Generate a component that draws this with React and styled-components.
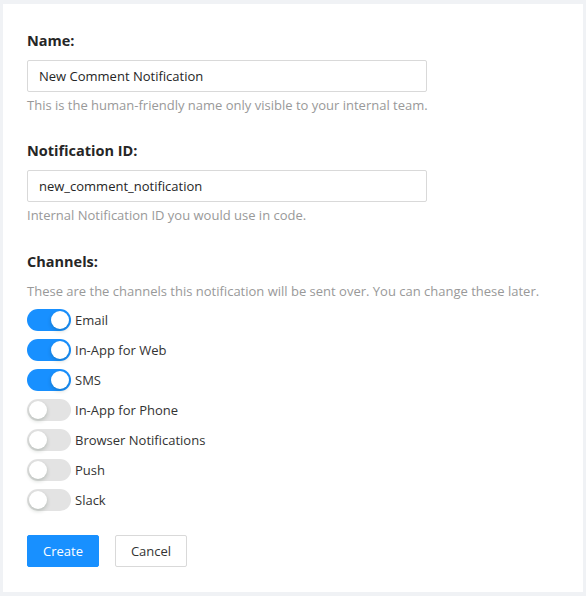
import React, { useState } from "react";
import styled, { createGlobalStyle } from "styled-components";

const GlobalStyle = createGlobalStyle`
  html, body {
    margin: 0;
    padding: 0;
    background: #f0f2f5;
  }
  body {
    font-family: "Open Sans", "Noto Sans", sans-serif;
  }
  * {
    box-sizing: border-box;
  }
`;

const Page = styled.div`
  width: 586px;
  height: 596px;
  padding: 4px 3px;
  background: #f0f2f5;
`;

const Card = styled.div`
  background: #fff;
  height: 100%;
  padding: 25px 24px 24px;
  display: flex;
  flex-direction: column;
`;

const Field = styled.div`
  display: flex;
  flex-direction: column;
  margin-bottom: 24px;
`;

const Channels = styled.div`
  margin-top: 1px;
`;

const Label = styled.div`
  font-size: 14.5px;
  font-weight: 700;
  line-height: 24px;
  color: #262626;
  margin-bottom: 7px;
`;

const Input = styled.input`
  width: 400px;
  height: 32px;
  border: 1px solid #d9d9d9;
  border-radius: 2px;
  padding: 0 11px;
  font-family: inherit;
  font-size: 13px;
  color: #262626;
  outline: none;
`;

const Help = styled.div`
  margin-top: 3px;
  font-size: 13px;
  line-height: 20px;
  color: #999;
`;

const Desc = styled(Help)`
  margin-top: 3px;
  margin-bottom: 4px;
`;

const Row = styled.label`
  display: flex;
  align-items: center;
  height: 30px;
  gap: 4px;
  font-size: 13px;
  color: #333;
  cursor: pointer;
`;

const Track = styled.span`
  position: relative;
  width: 44px;
  height: 22px;
  border-radius: 11px;
  background: ${(p) => (p.$on ? "#1890ff" : "#e3e3e3")};
  transition: background 0.2s;
  flex-shrink: 0;

  &::after {
    content: "";
    position: absolute;
    top: 2px;
    left: ${(p) => (p.$on ? "24px" : "2px")};
    width: 18px;
    height: 18px;
    border-radius: 50%;
    background: #fff;
    box-shadow: 0 2px 4px rgba(0, 35, 11, 0.2);
    transition: left 0.2s;
  }
`;

const Actions = styled.div`
  display: flex;
  gap: 16px;
  margin-top: 20px;
`;

const Button = styled.button`
  height: 32px;
  width: 72px;
  border-radius: 2px;
  font-family: inherit;
  font-size: 13px;
  cursor: pointer;
  border: 1px solid ${(p) => (p.$primary ? "#1890ff" : "#d9d9d9")};
  background: ${(p) => (p.$primary ? "#1890ff" : "#fff")};
  color: ${(p) => (p.$primary ? "#fff" : "#333")};
`;

const channelList = [
  { name: "Email", on: true },
  { name: "In-App for Web", on: true },
  { name: "SMS", on: true },
  { name: "In-App for Phone", on: false },
  { name: "Browser Notifications", on: false },
  { name: "Push", on: false },
  { name: "Slack", on: false },
];

const App = () => {
  const [channels, setChannels] = useState(channelList);

  const toggle = (idx) => {
    setChannels(channels.map((c, i) => (i === idx ? { ...c, on: !c.on } : c)));
  };

  return (
    <Page>
      <GlobalStyle />
      <Card>
        <Field>
          <Label>Name:</Label>
          <Input defaultValue="New Comment Notification" />
          <Help>This is the human-friendly name only visible to your internal team.</Help>
        </Field>

        <Field>
          <Label>Notification ID:</Label>
          <Input defaultValue="new_comment_notification" />
          <Help>Internal Notification ID you would use in code.</Help>
        </Field>

        <Channels>
          <Label>Channels:</Label>
          <Desc>
            These are the channels this notification will be sent over. You can change these later.
          </Desc>
          {channels.map((c, i) => (
            <Row key={c.name} onClick={() => toggle(i)}>
              <Track $on={c.on} />
              {c.name}
            </Row>
          ))}
        </Channels>

        <Actions>
          <Button $primary>Create</Button>
          <Button>Cancel</Button>
        </Actions>
      </Card>
    </Page>
  );
};

export default App;
